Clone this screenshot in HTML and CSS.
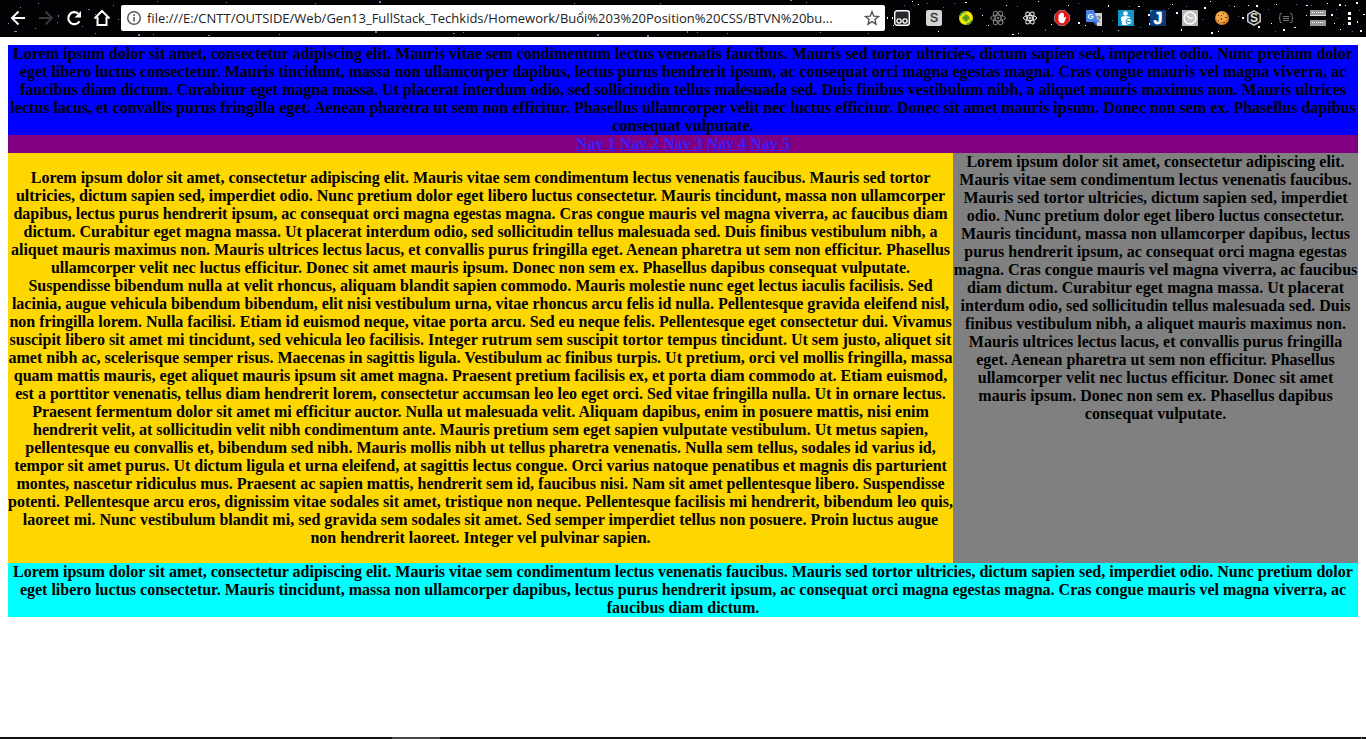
FILE: index.html
```html
<!DOCTYPE html>
<html lang="en">
<head>
<meta charset="utf-8">
<title>Position CSS</title>
<link rel="stylesheet" href="styles.css">
</head>
<body>
<div class="toolbar">
  <svg class="stars" width="1366" height="37" aria-hidden="true">
    <path fill="#6f86b8" d="M38 3h1v1h-1zM20 7h1v1h-1zM58 15h1v2h-1zM57 22h1v1h-1zM8 23h1v1h-1zM14 31h3v1h-3zM35 28h1v1h-1zM88 9h2v1h-2zM95 14h1v1h-1zM97 19h2v1h-2zM82 26h1v1h-1zM113 5h1v1h-1zM118 19h1v1h-1zM95 33h1v1h-1zM138 34h2v2h-2zM153 34h1v1h-1zM208 35h2v1h-2zM157 1h1v1h-1zM226 2h1v1h-1zM279 34h1v1h-1zM315 3h1v1h-1zM379 1h2v2h-2zM375 31h2v2h-2zM453 33h2v1h-2zM463 32h1v1h-1zM518 34h1v1h-1zM574 3h1v1h-1zM597 34h2v2h-2zM647 35h2v2h-2zM660 3h1v1h-1zM687 31h1v2h-1zM697 32h1v1h-1zM727 33h1v1h-1zM790 0h2v1h-2zM806 2h1v1h-1zM820 32h1v1h-1zM868 33h1v1h-1z"/>
    <path fill="#fff" d="M887 17h1v2h-1zM892 17h1v2h-1zM893 25h1v1h-1zM912 1h1v1h-1zM918 4h1v1h-1zM938 31h1v1h-1zM965 2h2v1h-2zM982 15h1v1h-1zM988 25h1v1h-1zM1006 5h1v1h-1zM1012 34h2v1h-2zM1018 33h1v1h-1zM1038 1h1v1h-1zM1051 24h1v1h-1zM1068 5h1v1h-1zM1078 22h2v2h-2zM1085 25h1v1h-1zM1108 5h1v2h-1zM1118 30h1v1h-1zM1138 6h2v1h-2zM1148 14h2v2h-2zM1149 23h1v2h-1zM1172 4h1v1h-1zM1176 12h2v2h-2zM1181 29h1v2h-1zM1204 7h2v2h-2zM1210 1h1v1h-1zM1211 32h2v2h-2zM1218 31h1v1h-1zM1234 6h1v1h-1zM1242 17h2v2h-2zM1248 5h1v1h-1zM1256 5h2v2h-2zM1258 26h2v2h-2zM1271 23h1v1h-1zM1276 4h1v1h-1zM1283 29h2v2h-2zM1294 27h2v1h-2zM1306 5h2v1h-2zM1306 15h1v1h-1zM1327 3h1v1h-1zM1331 14h2v2h-2zM1334 23h1v1h-1zM1339 4h2v2h-2zM1340 29h1v1h-1zM1345 5h1v1h-1zM1356 2h2v2h-2zM1357 21h1v2h-1zM1360 30h2v2h-2zM1363 14h2v1h-2z"/>
    <path fill="#4c6a9c" d="M904 5h1v1h-1zM927 3h1v1h-1zM943 7h1v1h-1zM954 3h1v1h-1zM980 8h1v1h-1zM1003 22h1v1h-1zM1017 6h1v1h-1zM1045 29h1v2h-1zM1050 9h1v1h-1zM1078 3h1v1h-1zM1102 31h1v1h-1zM1112 20h1v1h-1zM1129 6h1v1h-1zM1140 27h1v1h-1zM1168 8h1v1h-1zM1186 6h1v1h-1zM1197 25h1v1h-1zM1202 19h1v1h-1zM1229 5h1v1h-1zM1238 16h1v1h-1zM1268 9h1v1h-1zM1275 31h1v1h-1zM1296 4h1v1h-1zM1311 5h1v1h-1zM1336 9h1v1h-1zM1337 18h1v1h-1zM1343 24h1v1h-1zM1352 31h1v1h-1zM1359 10h1v1h-1z"/>
  </svg>
  <button class="tool" aria-label="Back"><svg width="16" height="16" viewBox="0 0 16 16" fill="none" stroke="#fff" stroke-width="2"><path d="M15 8H2.500M8.500 1.500L2 8l6.500 6.500"/></svg></button>
  <button class="tool" aria-label="Forward"><svg width="16" height="16" viewBox="0 0 16 16" fill="none" stroke="#3b3b3b" stroke-width="2"><path d="M1 8h12.500M7.500 1.500L14 8l-6.500 6.500"/></svg></button>
  <button class="tool" aria-label="Reload"><svg width="16" height="16" viewBox="0 0 16 16"><path d="M13.500 11.200A6 6 0 1 1 12.300 3.700" fill="none" stroke="#fff" stroke-width="2.200"/><path d="M15 1v6.500H8.500z" fill="#fff"/></svg></button>
  <button class="tool" aria-label="Home"><svg width="18" height="18" viewBox="0 0 18 18" fill="none" stroke="#fff" stroke-width="2"><path d="M1.500 9.500L9 2l7.500 7.500M4.500 8v8h9V8"/></svg></button>
  <div class="address">
    <svg width="16" height="16" viewBox="0 0 16 16"><circle cx="8" cy="8" r="6.300" fill="none" stroke="#5a5a5a" stroke-width="1.500"/><path d="M7.200 7h1.600v4.500H7.200zM7.200 4.300h1.600v1.600H7.200z" fill="#5a5a5a"/></svg>
    <input class="url" aria-label="Address" value="file:///E:/CNTT/OUTSIDE/Web/Gen13_FullStack_Techkids/Homework/Buổi%203%20Position%20CSS/BTVN%20bu...">
    <button class="bookmark" aria-label="Bookmark"><svg width="16" height="16" viewBox="0 0 16 16"><path d="M8 1.800l1.800 4.300 4.700.4-3.600 3 1.100 4.700L8 11.700l-4 2.500 1.100-4.700-3.600-3 4.700-.4z" fill="none" stroke="#555" stroke-width="1.400"/></svg></button>
  </div>
  <div class="extensions">
    <button class="ext" aria-label="Reader"><svg width="16" height="16" viewBox="0 0 16 16"><rect x=".7" y=".7" width="14.600" height="14.600" rx="2.500" fill="#25292b" stroke="#fff" stroke-width="1.400"/><g fill="#222" stroke="#fff" stroke-width="1.300"><circle cx="5" cy="11" r="2.100"/><circle cx="11" cy="11" r="2.100"/></g></svg></button>
    <button class="ext" aria-label="Stylish"><svg width="16" height="16" viewBox="0 0 16 16"><rect width="16" height="16" rx="2" fill="#d5d5d5"/><text x="8" y="12" text-anchor="middle" class="glyph" font-size="12" fill="#333" stroke="#333" stroke-width=".4">S</text></svg></button>
    <button class="ext" aria-label="Add"><svg width="16" height="16" viewBox="0 0 16 16"><circle cx="8" cy="8" r="7" fill="#f6e600"/><path d="M1.300 6A7 7 0 0 1 8 1v1.500A6 6 0 0 0 3 6zM14.700 10A7 7 0 0 1 8 15v-1.500A6 6 0 0 0 13 10z" fill="#47a63b"/><path d="M6.500 4.500h3v2h2v3h-2v2h-3v-2h-2v-3h2z" fill="#4d9a24"/></svg></button>
    <button class="ext" aria-label="React"><svg width="16" height="16" viewBox="0 0 16 16" fill="none" stroke="#858585"><ellipse cx="8" cy="8" rx="7.400" ry="2.900"/><ellipse cx="8" cy="8" rx="7.400" ry="2.900" transform="rotate(60 8 8)"/><ellipse cx="8" cy="8" rx="7.400" ry="2.900" transform="rotate(120 8 8)"/><circle cx="8" cy="8" r="1"/></svg></button>
    <button class="ext" aria-label="React tools"><svg width="16" height="16" viewBox="0 0 16 16" fill="none" stroke="#eee"><ellipse cx="8" cy="8" rx="6.600" ry="2.600"/><ellipse cx="8" cy="8" rx="6.600" ry="2.600" transform="rotate(60 8 8)"/><ellipse cx="8" cy="8" rx="6.600" ry="2.600" transform="rotate(120 8 8)"/><circle cx="8" cy="8" r="1"/></svg></button>
    <button class="ext" aria-label="Blocker"><svg width="16" height="16" viewBox="0 0 16 16"><path d="M5 .5h6L15.500 5v6L11 15.500H5L.5 11V5z" fill="#e3151a" stroke="#bbb" stroke-width=".6"/><path d="M4.500 5q.7-.8 1.200 0V3.500q.7-.8 1.300 0V3q.8-.9 1.500 0v.5q.8-.8 1.400 0V8l1.200-1.200q1-.2.900.7L10.400 12q-.7 1.300-2.400 1.300-2.800 0-3.500-3z" fill="#fff"/></svg></button>
    <button class="ext" aria-label="Translate"><svg width="16" height="16" viewBox="0 0 16 16"><path d="M6 3h10v13h-5z" fill="#cfd3d8"/><path d="M9 7h6M12 6v1M14 7q-1 4-4 5M10.500 8.500q1 2.500 3.500 4" stroke="#66757f" fill="none"/><path d="M0 0h8l3.500 12H1q-1 0-1-1z" fill="#4683ea"/><path d="M7 12h4.500L9.500 15.500z" fill="#2757c4"/><text x="4.500" y="9" text-anchor="middle" class="glyph" font-size="8" font-weight="bold" fill="#fff">G</text></svg></button>
    <button class="ext" aria-label="Profile"><svg width="16" height="16" viewBox="0 0 16 16"><path fill="#1596c8" d="M0 0h16v16H0z"/><circle cx="7.500" cy="3.500" r="2.300" fill="#fff"/><path d="M3 7q4.500-2 9 0v4H11v4H4v-4H3z" fill="#fff"/><circle cx="11" cy="11.500" r="3" fill="#fff" stroke="#1596c8"/><path d="M9 11.500h4" stroke="#1596c8"/></svg></button>
    <button class="ext" aria-label="J"><svg width="16" height="16" viewBox="0 0 16 16"><path fill="#083c7c" d="M0 0h16v16H0z"/><path fill="#1596c8" d="M0 0h3L0 3z"/><text x="8" y="14" text-anchor="middle" class="glyph" font-size="16" font-weight="bold" fill="#fff" stroke="#fff" stroke-width=".6">J</text></svg></button>
    <button class="ext" aria-label="Clock"><svg width="16" height="16" viewBox="0 0 16 16"><path fill="#b5b5b5" d="M0 0h16v16H0z"/><circle cx="8" cy="8" r="6" fill="#c4c4c4" stroke="#fff" stroke-width="1.500"/><path d="M4.800 5.500L8 8.500l3.500-1" fill="none" stroke="#fff" stroke-width="1.300"/></svg></button>
    <button class="ext" aria-label="Cookies"><svg width="16" height="16" viewBox="0 0 16 16"><circle cx="8" cy="8" r="7" fill="#d98226"/><circle cx="7.500" cy="7" r="5.500" fill="#f0a84b"/><path d="M4 5h1v1H4zM9 3h1v1H9zM11 7h2v1h-2zM7 8h1v2H7zM4 10h1v1H4zM9 12h2v1H9zM7 5h1v1H7z" fill="#74380d"/></svg></button>
    <button class="ext" aria-label="S"><svg width="16" height="16" viewBox="0 0 16 16"><path d="M8 .8l6.200 3.600v7.200L8 15.200l-6.200-3.600V4.400z" fill="#111" stroke="#ccc" stroke-width="1.500"/><text x="8" y="12" text-anchor="middle" class="glyph" font-size="12" font-weight="bold" fill="#ddd">S</text></svg></button>
    <button class="ext" aria-label="Format"><svg width="16" height="16" viewBox="0 0 16 16" fill="none" stroke="#777"><path d="M4 3.500H3q-1 0-1 1V7L1 8l1 1v2.500q0 1 1 1h1M12 3.500h1q1 0 1 1V7l1 1-1 1v2.500q0 1-1 1h-1M5 6.500h6M5 8.500h6M5 10.500h6"/></svg></button>
    <button class="ext" aria-label="Rows"><svg width="16" height="16" viewBox="0 0 16 16"><path d="M0 0h16v6H0zM0 10h16v6H0z" fill="#999"/><path d="M2 2.500h12M2 12.500h12" stroke="#fff" stroke-dasharray="1 1"/><path d="M0 5.500h16" stroke="#ddd"/></svg></button>
    <button class="ext" aria-label="Menu"><svg width="16" height="16" viewBox="0 0 16 16" fill="#fff"><path d="M6 2h3v3H6zM6 7h3v3H6zM6 12h3v3H6z"/></svg></button>
  </div>
</div>
<div class="page">
  <header class="header">Lorem ipsum dolor sit amet, consectetur adipiscing elit. Mauris vitae sem condimentum lectus venenatis faucibus. Mauris sed tortor ultricies, dictum sapien sed, imperdiet odio. Nunc pretium dolor eget libero luctus consectetur. Mauris tincidunt, massa non ullamcorper dapibus, lectus purus hendrerit ipsum, ac consequat orci magna egestas magna. Cras congue mauris vel magna viverra, ac faucibus diam dictum. Curabitur eget magna massa. Ut placerat interdum odio, sed sollicitudin tellus malesuada sed. Duis finibus vestibulum nibh, a aliquet mauris maximus non. Mauris ultrices lectus lacus, et convallis purus fringilla eget. Aenean pharetra ut sem non efficitur. Phasellus ullamcorper velit nec luctus efficitur. Donec sit amet mauris ipsum. Donec non sem ex. Phasellus dapibus consequat vulputate.</header>
  <nav class="nav">
    <a href="#">Nav 1</a>
    <a href="#">Nav 2</a>
    <a href="#">Nav 3</a>
    <a href="#">Nav 4</a>
    <a href="#">Nav 5</a>
  </nav>
  <div class="columns">
    <main class="content">
      <p class="text">Lorem ipsum dolor sit amet, consectetur adipiscing elit. Mauris vitae sem condimentum lectus venenatis faucibus. Mauris sed tortor ultricies, dictum sapien sed, imperdiet odio. Nunc pretium dolor eget libero luctus consectetur. Mauris tincidunt, massa non ullamcorper dapibus, lectus purus hendrerit ipsum, ac consequat orci magna egestas magna. Cras congue mauris vel magna viverra, ac faucibus diam dictum. Curabitur eget magna massa. Ut placerat interdum odio, sed sollicitudin tellus malesuada sed. Duis finibus vestibulum nibh, a aliquet mauris maximus non. Mauris ultrices lectus lacus, et convallis purus fringilla eget. Aenean pharetra ut sem non efficitur. Phasellus ullamcorper velit nec luctus efficitur. Donec sit amet mauris ipsum. Donec non sem ex. Phasellus dapibus consequat vulputate.</p>
      <p class="text">Suspendisse bibendum nulla at velit rhoncus, aliquam blandit sapien commodo. Mauris molestie nunc eget lectus iaculis facilisis. Sed lacinia, augue vehicula bibendum bibendum, elit nisi vestibulum urna, vitae rhoncus arcu felis id nulla. Pellentesque gravida eleifend nisl, non fringilla lorem. Nulla facilisi. Etiam id euismod neque, vitae porta arcu. Sed eu neque felis. Pellentesque eget consectetur dui. Vivamus suscipit libero sit amet mi tincidunt, sed vehicula leo facilisis. Integer rutrum sem suscipit tortor tempus tincidunt. Ut sem justo, aliquet sit amet nibh ac, scelerisque semper risus. Maecenas in sagittis ligula. Vestibulum ac finibus turpis. Ut pretium, orci vel mollis fringilla, massa quam mattis mauris, eget aliquet mauris ipsum sit amet magna. Praesent pretium facilisis ex, et porta diam commodo at. Etiam euismod, est a porttitor venenatis, tellus diam hendrerit lorem, consectetur accumsan leo leo eget orci. Sed vitae fringilla nulla. Ut in ornare lectus. Praesent fermentum dolor sit amet mi efficitur auctor. Nulla ut malesuada velit. Aliquam dapibus, enim in posuere mattis, nisi enim hendrerit velit, at sollicitudin velit nibh condimentum ante. Mauris pretium sem eget sapien vulputate vestibulum. Ut metus sapien, pellentesque eu convallis et, bibendum sed nibh. Mauris mollis nibh ut tellus pharetra venenatis. Nulla sem tellus, sodales id varius id, tempor sit amet purus. Ut dictum ligula et urna eleifend, at sagittis lectus congue. Orci varius natoque penatibus et magnis dis parturient montes, nascetur ridiculus mus. Praesent ac sapien mattis, hendrerit sem id, faucibus nisi. Nam sit amet pellentesque libero. Suspendisse potenti. Pellentesque arcu eros, dignissim vitae sodales sit amet, tristique non neque. Pellentesque facilisis mi hendrerit, bibendum leo quis, laoreet mi. Nunc vestibulum blandit mi, sed gravida sem sodales sit amet. Sed semper imperdiet tellus non posuere. Proin luctus augue non hendrerit laoreet. Integer vel pulvinar sapien.</p>
    </main>
    <aside class="sidebar">Lorem ipsum dolor sit amet, consectetur adipiscing elit. Mauris vitae sem condimentum lectus venenatis faucibus. Mauris sed tortor ultricies, dictum sapien sed, imperdiet odio. Nunc pretium dolor eget libero luctus consectetur. Mauris tincidunt, massa non ullamcorper dapibus, lectus purus hendrerit ipsum, ac consequat orci magna egestas magna. Cras congue mauris vel magna viverra, ac faucibus diam dictum. Curabitur eget magna massa. Ut placerat interdum odio, sed sollicitudin tellus malesuada sed. Duis finibus vestibulum nibh, a aliquet mauris maximus non. Mauris ultrices lectus lacus, et convallis purus fringilla eget. Aenean pharetra ut sem non efficitur. Phasellus ullamcorper velit nec luctus efficitur. Donec sit amet mauris ipsum. Donec non sem ex. Phasellus dapibus consequat vulputate.</aside>
  </div>
  <footer class="footer">Lorem ipsum dolor sit amet, consectetur adipiscing elit. Mauris vitae sem condimentum lectus venenatis faucibus. Mauris sed tortor ultricies, dictum sapien sed, imperdiet odio. Nunc pretium dolor eget libero luctus consectetur. Mauris tincidunt, massa non ullamcorper dapibus, lectus purus hendrerit ipsum, ac consequat orci magna egestas magna. Cras congue mauris vel magna viverra, ac faucibus diam dictum.</footer>
</div>
<div class="taskbar"><span class="task"></span><span class="edge"></span></div>
</body>
</html>
```
FILE: styles.css
```css
* { box-sizing: border-box; }
body {
  margin: 0;
  min-height: 100vh;
  display: flex;
  flex-direction: column;
  background: #fff;
  color: #000;
  font: bold 16px/18px "Liberation Serif", "Times New Roman", serif;
}
button {
  border: 0;
  padding: 0;
  background: none;
  display: flex;
  align-items: center;
  justify-content: center;
}
.toolbar {
  position: relative;
  display: flex;
  align-items: center;
  height: 37px;
  padding: 0 0 1px 4px;
  background: #020204;
  overflow: hidden;
}
.stars { position: absolute; left: 0; top: 0; }
.tool { position: relative; width: 28px; height: 28px; flex: none; }
.address {
  position: relative;
  display: flex;
  align-items: center;
  flex: 1;
  min-width: 0;
  height: 26px;
  margin-left: 5px;
  padding: 0 5px;
  gap: 5px;
  background: #fff;
  border-radius: 2px;
}
.address svg { flex: none; }
.url {
  flex: 1;
  min-width: 0;
  height: 24px;
  border: 0;
  padding: 0;
  outline: 0;
  background: none;
  color: #222;
  font: 13px/20px "Open Sans", "Noto Sans", sans-serif;
  text-overflow: ellipsis;
}
.bookmark { width: 16px; height: 16px; }
.extensions { position: relative; display: flex; flex: none; margin-left: 1px; }
.ext { width: 32px; height: 28px; }
.glyph { font-family: "Liberation Sans", Arial, sans-serif; }
.page { flex: 1; padding: 8px; text-align: center; }
.header { background: #00f; }
.nav { background: #800080; }
.nav a { color: #3a1eff; }
.columns { display: flex; }
.content { width: 70%; padding: 16px 0; background: #ffd700; }
.text { margin: 0; }
.sidebar { width: 30%; background: #808080; }
.footer { background: #0ff; }
.taskbar {
  display: flex;
  justify-content: space-between;
  height: 2px;
  padding: 0 4px 0 392px;
  background: #111;
}
.task { width: 48px; background: #444; }
.edge { width: 1px; background: #666; }
```
